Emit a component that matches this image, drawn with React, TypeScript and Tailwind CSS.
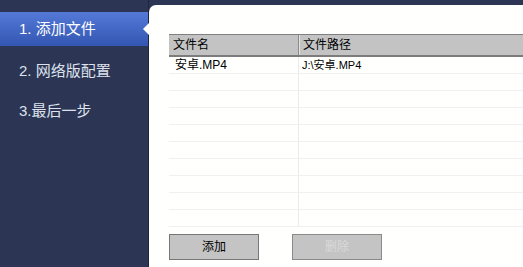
const rows = [
  { name: '安卓.MP4', path: 'J:\\安卓.MP4' },
  { name: '', path: '' },
  { name: '', path: '' },
  { name: '', path: '' },
  { name: '', path: '' },
  { name: '', path: '' },
  { name: '', path: '' },
  { name: '', path: '' },
  { name: '', path: '' },
  { name: '', path: '' },
];

export default function App() {
  return (
    <div
      className="flex w-[523px] h-[267px] overflow-hidden bg-[#2c3553]"
      style={{ fontFamily: '"Liberation Sans", "Noto Sans CJK SC", sans-serif' }}
    >
      {/* Steps */}
      <div className="w-[149px] shrink-0 pt-[12px] border-r border-[#1f2740]">
        <div className="h-[34px] flex items-center pl-[19px] text-[15px] text-white bg-gradient-to-b from-[#5479d6] to-[#3456b3]">
          1. 添加文件
        </div>
        <div className="mt-[5px] h-[40px] flex items-center pl-[19px] text-[15px] text-[#dde2ee]">
          2. 网络版配置
        </div>
        <div className="h-[40px] flex items-center pl-[19px] text-[15px] text-[#dde2ee]">
          3.最后一步
        </div>
      </div>

      {/* Content */}
      <div className="relative mt-[5px] flex-1 bg-[#fffffd] rounded-tl-[7px] pl-[20px] pt-[29px]">
        <div className="absolute left-[-6px] top-[18px] w-0 h-0 border-y-[6px] border-y-transparent border-r-[6px] border-r-[#fffffd]" />

        <div className="w-[360px] text-[12px] text-black">
          <div className="flex h-[23px] bg-[#c3c3c3] border-t border-[#808080] border-b-2 border-b-[#7c7c7c]">
            <div className="w-[130px] flex items-center pl-[4px] border-r border-[#8a8a8a]">文件名</div>
            <div className="flex-1 flex items-center pl-[3px] border-l border-[#e4e4e4]">文件路径</div>
          </div>
          {rows.map((r, i) => (
            <div key={i} className="flex h-[17px] border-b border-[#f0f0f0]">
              <div className="w-[130px] flex items-center pl-[6px] border-r border-[#ebebeb]">{r.name}</div>
              <div className="flex-1 flex items-center pl-[3px] text-[11px]">{r.path}</div>
            </div>
          ))}
        </div>

        <div className="flex gap-[33px] mt-[7px]">
          <button className="w-[90px] h-[26px] bg-[#c4c4c4] border border-[#777777] text-[12px] text-black">
            添加
          </button>
          <button className="w-[90px] h-[26px] bg-[#c4c4c4] border border-[#8a8a8a] text-[12px] text-[#dadada]">
            删除
          </button>
        </div>
      </div>
    </div>
  );
}
